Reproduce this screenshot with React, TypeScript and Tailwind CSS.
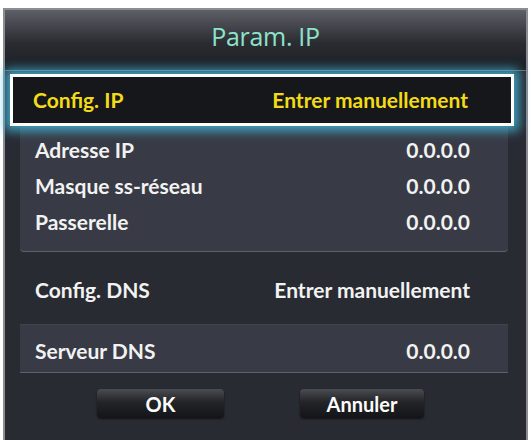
const font = { fontFamily: "Lato, 'Open Sans', sans-serif" };

function Row({ label, value, className = "" }: { label: string; value: string; className?: string }) {
  return (
    <div className={`flex items-center justify-between ${className}`}>
      <span>{label}</span>
      <span>{value}</span>
    </div>
  );
}

export default function App() {
  return (
    <div className="w-[531px] h-[440px] bg-white pt-2 px-[3px] overflow-hidden" style={font}>
      <div className="h-[432px] border-2 border-b-0 border-[#8b8d93] bg-[#292b33] flex flex-col">
        {/* title bar */}
        <div className="h-[61px] flex items-center justify-center bg-gradient-to-b from-[#5d6066] via-[#2a2c32] via-55% to-[#1c1e24] border-b border-[#6b6e76]">
          <h1 className="font-['Open_Sans'] text-[25px] text-[#8ee3cb] font-normal mt-[-7px] tracking-[-0.3px]">Param. IP</h1>
        </div>

        {/* focused row */}
        <div className="relative z-10 mt-[3px] ml-[5px] mr-[12px] h-[52px] border-[3px] border-white bg-[#16171b] shadow-[0_0_10px_5px_rgba(70,190,225,0.8)] flex items-center justify-between pl-[20px] pr-[43px] text-[21px] font-bold text-[#f3dc17]">
          <span>Config. IP</span>
          <span>Entrer manuellement</span>
        </div>

        {/* ip panel */}
        <div className="ml-[15px] mr-[18px] h-[126px] bg-[#383b46] border-b border-[#5d616d] rounded-b-[4px] pt-[6px] pl-[15px] pr-[38px] text-[21px] font-bold text-[#f2f2f2]">
          <Row label="Adresse IP" value="0.0.0.0" className="h-[36px]" />
          <Row label="Masque ss-réseau" value="0.0.0.0" className="h-[36px]" />
          <Row label="Passerelle" value="0.0.0.0" className="h-[36px]" />
        </div>

        <Row
          label="Config. DNS"
          value="Entrer manuellement"
          className="h-[72px] pt-[3px] ml-[15px] mr-[18px] pl-[15px] pr-[38px] text-[21px] font-bold text-[#f2f2f2]"
        />

        {/* dns panel */}
        <div className="ml-[15px] mr-[18px] h-[49px] bg-[#383b46] border-t border-[#3f4350] border-b border-b-[#5d616d] pt-[5px] pl-[15px] pr-[38px] text-[21px] font-bold text-[#f2f2f2]">
          <Row label="Serveur DNS" value="0.0.0.0" className="h-full" />
        </div>

        {/* buttons */}
        <div className="mt-[16px] flex pl-[92px] gap-[76px]">
          <button className="w-[127px] h-[29px] rounded-[4px] bg-gradient-to-b from-[#4c4d52] via-[#232428] via-45% to-[#141518] shadow-[0_1px_2px_rgba(0,0,0,0.6)] text-[20px] font-bold text-white leading-none">
            OK
          </button>
          <button className="w-[124px] h-[29px] rounded-[4px] bg-gradient-to-b from-[#4c4d52] via-[#232428] via-45% to-[#141518] shadow-[0_1px_2px_rgba(0,0,0,0.6)] text-[20px] font-bold text-white leading-none">
            Annuler
          </button>
        </div>
      </div>
    </div>
  );
}
